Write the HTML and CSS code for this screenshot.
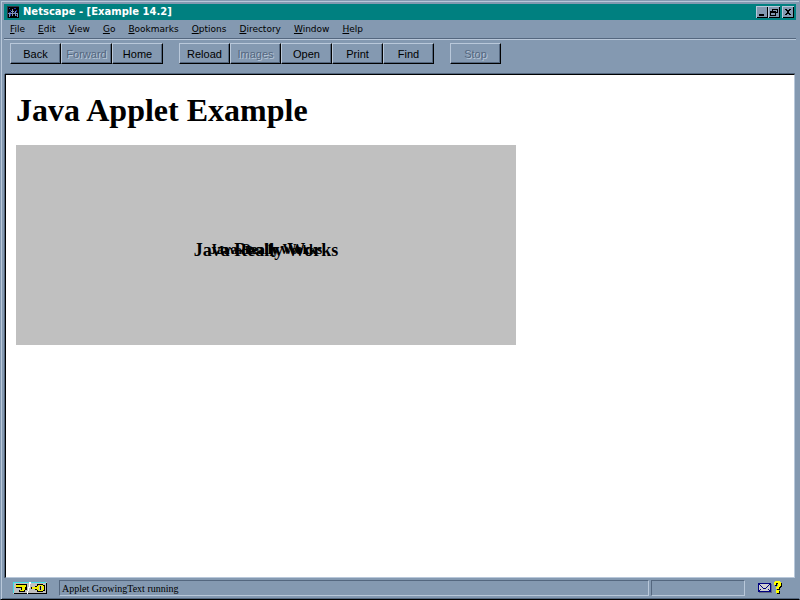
FILE: index.html
```html
<!DOCTYPE html>
<html lang="en">
<head>
  <meta charset="UTF-8" />
  <title>Netscape - [Example 14.2]</title>
  <link rel="stylesheet" href="styles.css">
</head>
<body>
  <div class="window">
    <header class="titlebar">
      <svg class="app-icon" width="12" height="12" viewBox="0 0 12 12" shape-rendering="crispEdges">
        <path fill="#000" d="M0 0h12v12H0z" />
        <path fill="#303848" d="M0 0h12v1H0zM0 1h1v11H0z" />
        <path fill="#2030b0" d="M2 2h1v1H2zM3 4h1v1H3zM7 2h2v1H7zM9 4h1v2H9zM2 6h2v1H2zM7 6h1v2H7zM3 8h1v2H3zM9 9h1v1H9z" />
        <path fill="#8090b8" d="M1 7h10v1H1zM5 3h1v7H5zM2 8h1v3H2zM8 5h1v5H8zM10 8h1v3h-1zM4 5h3v1H4z" />
      </svg>
      <span class="title">Netscape - [Example 14.2]</span>
      <div class="controls">
        <button class="control" aria-label="Minimize">
          <svg width="8" height="7" viewBox="0 0 8 7" shape-rendering="crispEdges"><path d="M1 5h5v2H1z" /></svg>
        </button>
        <button class="control" aria-label="Restore">
          <svg width="8" height="7" viewBox="0 0 8 7" shape-rendering="crispEdges"><path fill-rule="evenodd" d="M2 0h6v4H6v3H0V2h2zM3 1v1h3v1h1V1zM1 4v2h4V4z" /></svg>
        </button>
        <button class="control close" aria-label="Close">
          <svg width="8" height="7" viewBox="0 0 8 7" shape-rendering="crispEdges"><path d="M1 0h2v1h2V0h2v1H6v1H5v2h1v1h1v1H5V5H3v1H1V5h1V4h1V2H2V1H1z" /></svg>
        </button>
      </div>
    </header>

    <nav class="menubar">
      <button><u>F</u>ile</button>
      <button><u>E</u>dit</button>
      <button><u>V</u>iew</button>
      <button><u>G</u>o</button>
      <button><u>B</u>ookmarks</button>
      <button><u>O</u>ptions</button>
      <button><u>D</u>irectory</button>
      <button><u>W</u>indow</button>
      <button><u>H</u>elp</button>
    </nav>

    <div class="toolbar">
      <div class="group">
        <button>Back</button>
        <button disabled>Forward</button>
        <button>Home</button>
      </div>
      <div class="group">
        <button>Reload</button>
        <button disabled>Images</button>
        <button>Open</button>
        <button>Print</button>
        <button>Find</button>
      </div>
      <div class="group">
        <button disabled>Stop</button>
      </div>
    </div>

    <main class="page">
      <h1>Java Applet Example</h1>
      <div class="applet">
        <span class="grow small">Java Really Works</span>
        <span class="grow medium">Java Really Works</span>
        <span class="grow large">Java Really Works</span>
      </div>
    </main>

    <footer class="statusbar">
      <svg class="key" width="34" height="12" viewBox="0 0 34 12" shape-rendering="crispEdges">
        <path fill="#c0c0c0" d="M0 0h34v12H0z" />
        <path fill="#40e0e8" d="M0 0h33v1H0zM0 1h1v10H0z" />
        <path fill="#000" d="M33 1h1v11H1v-1h32z" />
        <!-- left half of the key -->
        <path fill="#000" d="M3 2h11v6h-2v2H6V8h2V6H3z" />
        <path fill="#f0f000" d="M3 3h10v2H3zM9 5h3v3H9zM7 8h4v1H7z" />
        <!-- right half with the ring -->
        <path fill="#000" d="M18 5h4V4h2V2h6v1h2v6h-2v1h-6V8h-2V7h-4z" />
        <path fill="#f0f000" d="M19 5h5v2h-5zM24 4h2v4h-2zM25 3h5v1h-5zM29 4h2v4h-2zM25 8h5v1h-5z" />
        <path fill="#c0c0c0" d="M26 4h1v4h-1zM28 4h1v4h-1z" />
        <path fill="#fff" d="M16 0h2v2h-1v4h-1v3h-1v3h-1V9h1V5h1z" />
      </svg>
      <div class="status-text">Applet GrowingText running</div>
      <div class="progress"></div>
      <button class="mail" aria-label="Mail">
        <svg width="24" height="14" viewBox="0 0 24 14" shape-rendering="crispEdges">
          <path fill="#606880" d="M1 11h13v1H1zM13 3h1v9h-1z" />
          <path fill="#000080" d="M0 2h13v9H0z" />
          <path fill="#d0d0d0" d="M1 3h11v7H1z" />
          <path fill="#000080" d="M1 3h1v1h1v1h1v1h1v1h3V6h1V5h1V4h1V3h1v1h-1v1h-1v1H9v1H8v1H5V7H4V6H3V5H2V4H1zM1 9h1V8h1v1H2v1H1zM11 9h-1V8h1v1h1v1h-1z" />
          <path fill="#000" d="M18 1h5v1h1v4h-1v1h-1v2h-3V7h1V5h1V3h-2v2h-2V2h1zM19 10h3v3h-3z" />
          <path fill="#ff0" d="M17 0h5v1h1v4h-1v1h-1v2h-3V6h1V5h1V2h-2v2h-2V1h1zM18 9h3v3h-3z" />
        </svg>
      </button>
    </footer>
  </div>
</body>
</html>
```
FILE: styles.css
```css
* {
  box-sizing: border-box;
}

body {
  margin: 0;
  background-color: #8499b1;
  color: #000;
  font-family: "Liberation Sans", Arial, sans-serif;
}

button {
  margin: 0;
  padding: 0;
  border: none;
  background: none;
  color: #000;
  font: inherit;
}

.window {
  display: flex;
  flex-direction: column;
  height: 100vh;
  padding: 3px 3px 0;
  border: 1px solid #8499b1;
  border-bottom-color: #000;
  box-shadow: inset 1px 1px #b9c8da, inset 0 -1px #54677f;
}

.titlebar {
  display: flex;
  align-items: center;
  height: 16px;
  padding: 0 2px 0 3px;
  background-color: #008080;
}

.title {
  flex: 1;
  margin-left: 4px;
  color: #fff;
  font: bold 10px/16px "DejaVu Sans", sans-serif;
}

.controls {
  display: flex;
}

.control {
  display: flex;
  align-items: center;
  justify-content: center;
  width: 12px;
  height: 12px;
  background-color: #8499b1;
  box-shadow: inset 1px 1px #b9c8da, inset -1px -1px #000;
}

.close {
  margin-left: 2px;
}

.menubar {
  display: flex;
  gap: 13px;
  height: 19px;
  padding: 0 6px;
  border-bottom: 1px solid #54677f;
  font: 9px/16px "DejaVu Sans", sans-serif;
}

.menubar u {
  text-underline-offset: 1px;
}

.toolbar {
  display: flex;
  gap: 16px;
  height: 34px;
  padding: 3px 6px;
  border-top: 1px solid #b9c8da;
  font-size: 11px;
}

.group {
  display: flex;
  height: 21px;
}

.toolbar button {
  width: 51px;
  border: 1px solid;
  border-color: #b9c8da #000 #000 #b9c8da;
  box-shadow: inset -1px -1px #54677f;
}

.toolbar button:disabled {
  color: #54677f;
  text-shadow: 1px 1px #b9c8da;
}

.page {
  flex: 1;
  margin: 1px 1px 0;
  padding: 0 10px;
  border: 1px solid #000;
  border-right-color: #b9c8da;
  border-bottom-color: #b9c8da;
  box-shadow: 0 -1px #54677f, -1px 0 #54677f;
  background-color: #fff;
  font-family: "Liberation Serif", "Times New Roman", serif;
}

h1 {
  margin: 16px 0;
  font-size: 32px;
  line-height: 38px;
}

.applet {
  position: relative;
  max-width: 500px;
  height: 200px;
  background-color: #c0c0c0;
  font-weight: bold;
}

/* frames of the growing text, all centred on the same baseline */
.grow {
  position: absolute;
  left: 0;
  right: 0;
  top: 95px;
  line-height: 20px;
  text-align: center;
}

.small {
  font-size: 12px;
}

.medium {
  font-size: 14px;
}

.large {
  font-size: 18px;
}

.statusbar {
  display: flex;
  align-items: center;
  gap: 2px;
  height: 21px;
  padding: 0 14px 2px 9px;
}

.key {
  margin-right: 10px;
}

.status-text,
.progress {
  height: 16px;
  border: 1px solid;
  border-color: #54677f #b9c8da #b9c8da #54677f;
}

.status-text {
  flex: 1;
  padding-left: 2px;
  font: 10px/15px "Liberation Serif", serif;
}

.progress {
  width: 94px;
}

.mail {
  display: flex;
  margin-left: 11px;
}
```
